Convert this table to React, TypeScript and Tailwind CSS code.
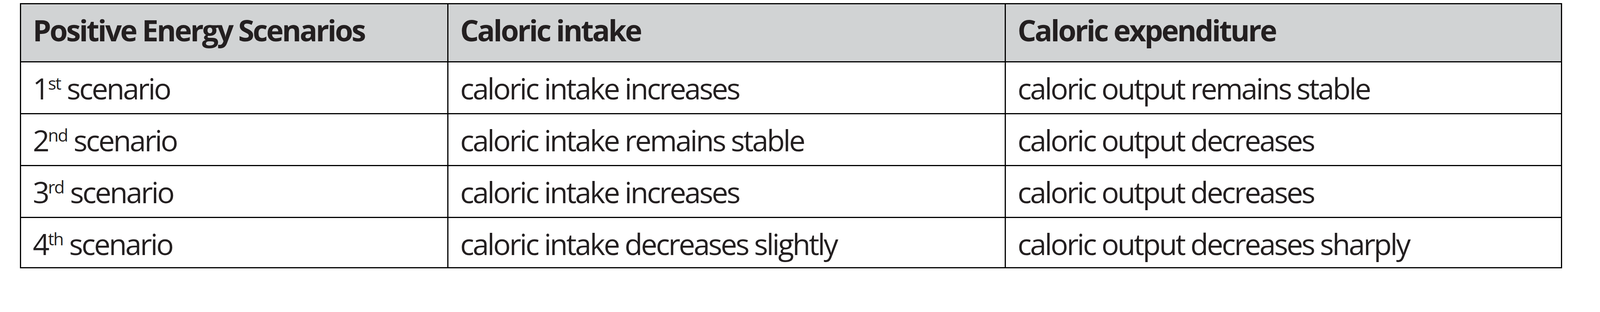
import React from "react";

type Row = { n: string; sup: string; intake: string; output: string };

const rows: Row[] = [
  { n: "1", sup: "st", intake: "caloric intake increases", output: "caloric output remains stable" },
  { n: "2", sup: "nd", intake: "caloric intake remains stable", output: "caloric output decreases" },
  { n: "3", sup: "rd", intake: "caloric intake increases", output: "caloric output decreases" },
  { n: "4", sup: "th", intake: "caloric intake decreases slightly", output: "caloric output decreases sharply" },
];

const cell =
  "border-r-[3px] border-b-[3px] border-black pl-[30px] pt-[28px] whitespace-nowrap overflow-hidden";

export default function App() {
  return (
    <div
      className="w-full h-[800px] bg-white text-[#231f20] pt-[8px] pl-[51px] overflow-hidden"
      style={{ fontFamily: '"Open Sans", "Noto Sans", sans-serif' }}
    >
      <div className="w-[3948px] border-l-[3px] border-t-[3px] border-black grid grid-cols-[1094px_1427px_1424px] grid-rows-[149px_133px_133px_133px_129px] text-[75px] leading-[76px] tracking-[-4px]">
        <div className={`${cell} bg-[#d1d3d4] font-bold`}>Positive Energy Scenarios</div>
        <div className={`${cell} bg-[#d1d3d4] font-bold`}>Caloric intake</div>
        <div className={`${cell} bg-[#d1d3d4] font-bold`}>Caloric expenditure</div>
        {rows.map((r) => (
          <React.Fragment key={r.n}>
            <div className={cell}>
              {r.n}
              <span className="text-[44px] leading-none align-[25px] tracking-[-2px]">{r.sup}</span>{" "}
              scenario
            </div>
            <div className={cell}>{r.intake}</div>
            <div className={cell}>{r.output}</div>
          </React.Fragment>
        ))}
      </div>
    </div>
  );
}
